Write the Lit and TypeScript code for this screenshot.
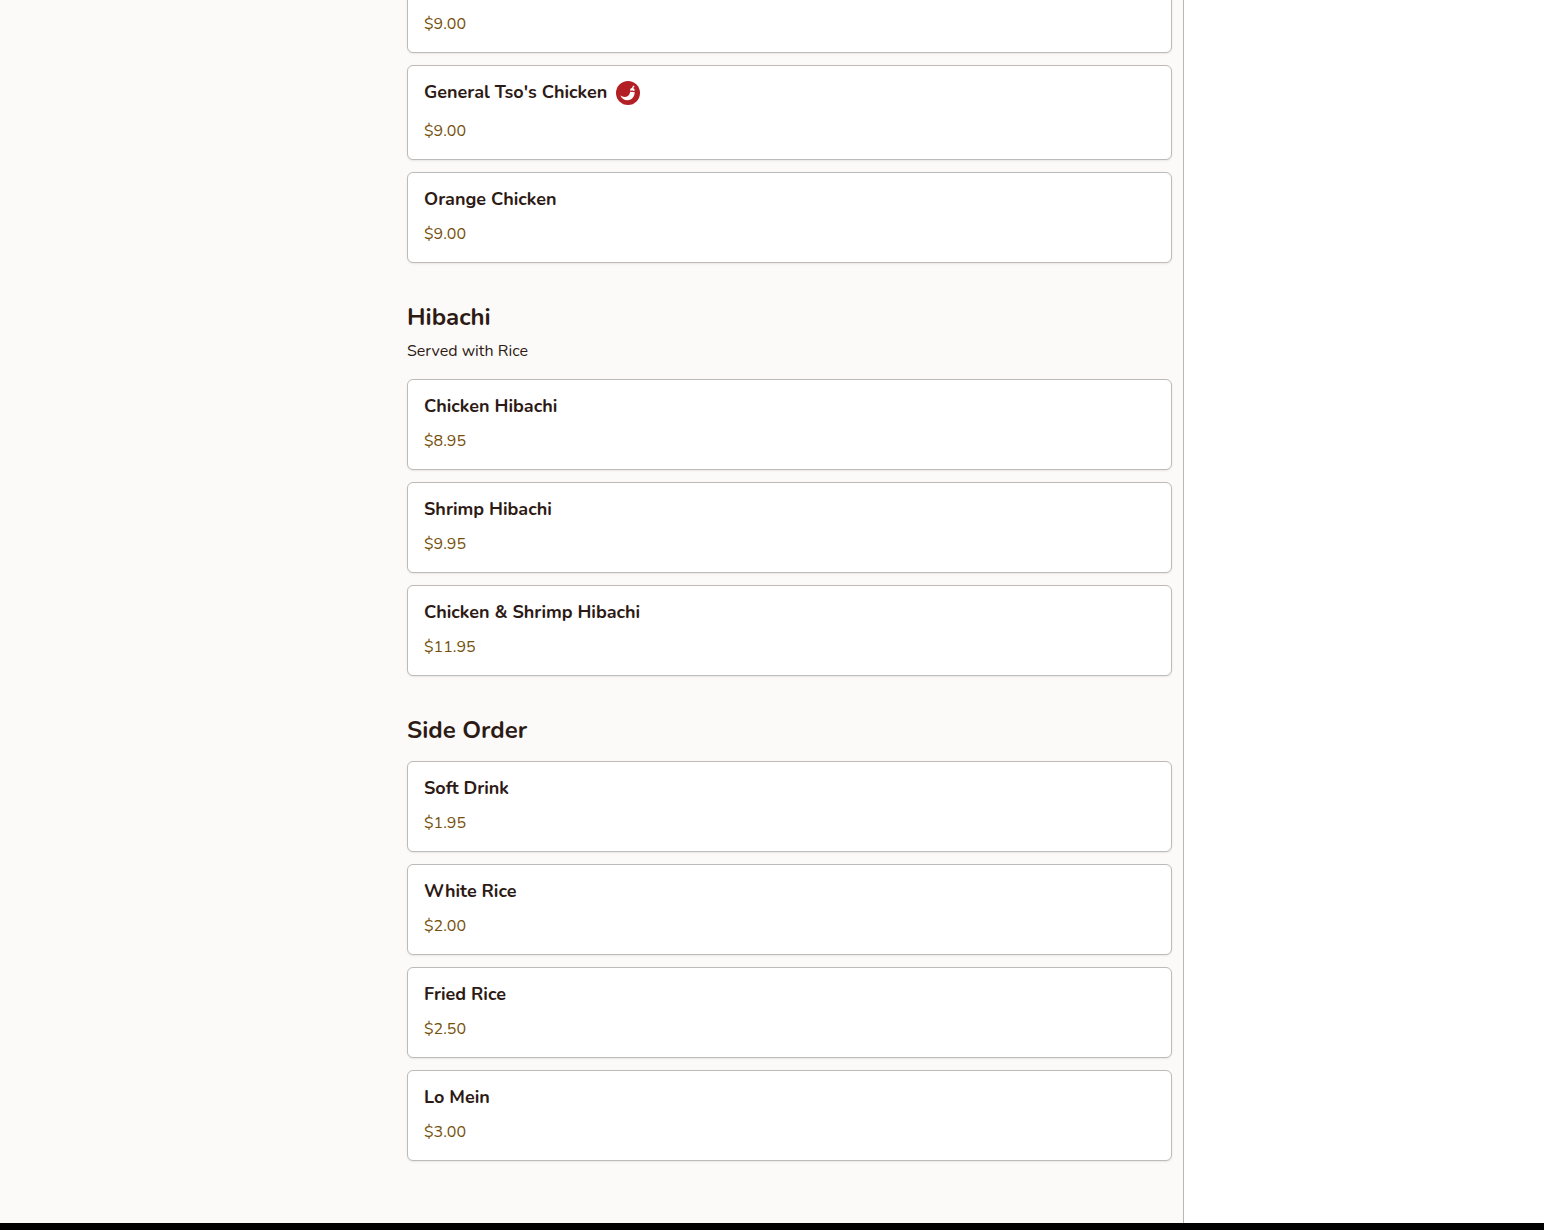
import { LitElement, html, css, nothing } from "lit";
import { customElement, property } from "lit/decorators.js";

interface Dish {
  name: string;
  price: string;
  spicy?: boolean;
}

interface Section {
  id: string;
  title?: string;
  note?: string;
  dishes: Dish[];
}

const MENU: Section[] = [
  {
    id: "chicken",
    dishes: [
      { name: "Sesame Chicken", price: "$9.00" },
      { name: "General Tso's Chicken", price: "$9.00", spicy: true },
      { name: "Orange Chicken", price: "$9.00" },
    ],
  },
  {
    id: "hibachi",
    title: "Hibachi",
    note: "Served with Rice",
    dishes: [
      { name: "Chicken Hibachi", price: "$8.95" },
      { name: "Shrimp Hibachi", price: "$9.95" },
      { name: "Chicken & Shrimp Hibachi", price: "$11.95" },
    ],
  },
  {
    id: "side-order",
    title: "Side Order",
    dishes: [
      { name: "Soft Drink", price: "$1.95" },
      { name: "White Rice", price: "$2.00" },
      { name: "Fried Rice", price: "$2.50" },
      { name: "Lo Mein", price: "$3.00" },
    ],
  },
];

@customElement("menu-item")
export class MenuItem extends LitElement {
  @property({ attribute: false }) dish!: Dish;

  static styles = css`
    :host {
      display: block;
    }
    .card {
      display: block;
      box-sizing: border-box;
      padding: 14px 16px 16px;
      border: 1px solid #bdbab8;
      border-radius: 6px;
      background: #fff;
      box-shadow: 0 1px 2px rgba(0, 0, 0, 0.08);
      color: #2d1a15;
      text-decoration: none;
    }
    .name {
      display: flex;
      align-items: flex-start;
      gap: 9px;
      margin: 0;
      font-size: 18px;
      font-weight: 700;
      line-height: 24px;
    }
    .spicy {
      display: block;
      width: 24px;
      height: 24px;
      margin: 1px 0 3px;
    }
    .price {
      margin: 11px 0 0;
      font-size: 16px;
      line-height: 24px;
      color: #754f0c;
    }
  `;

  render() {
    const { name, price, spicy } = this.dish;
    return html`
      <a class="card" href="#">
        <h3 class="name">
          <span>${name}</span>
          ${spicy
            ? html`<svg class="spicy" viewBox="0 0 24 24" role="img" aria-label="Spicy">
                <circle cx="12" cy="12" r="12" fill="#b22026" />
                <path
                  d="M4.300 14.200C6.500 16.200 9.800 16.500 11.900 14.900C13.500 13.700 13.900 12.200 14.100 10.500C14.700 11.100 15.500 11.200 16.200 10.700C16.900 11.300 17.800 11.300 18.500 10.800C19 14.200 17.200 17.500 14 18.800C10.200 20.200 5.900 18.400 4.300 14.200Z"
                  fill="#fff"
                />
                <path
                  d="M14.100 9.200C14.200 7.900 15 7.200 16.100 7.100C16.200 6.100 16.700 5.200 17.600 4.600L18.600 5.500C17.800 6 17.500 6.600 17.500 7.400C18.500 7.700 18.900 8.600 18.600 9.600C17.900 10.100 17 10 16.300 9.300C15.600 9.900 14.800 9.900 14.100 9.200Z"
                  fill="#fff"
                />
              </svg>`
            : nothing}
        </h3>
        <p class="price">${price}</p>
      </a>
    `;
  }
}

@customElement("app-root")
export class AppRoot extends LitElement {
  static styles = css`
    :host {
      display: block;
      font-family: Nunito, "Open Sans", Lato, sans-serif;
      color: #2d1a15;
    }
    .page {
      display: flex;
      flex-direction: column;
      min-height: 100vh;
      overflow: hidden;
      background: #fff;
    }
    .body {
      flex: 1;
      display: grid;
      grid-template-columns: 395px minmax(0, 1fr) 360px;
    }
    .nav {
      background: #fbfaf8;
    }
    .menu {
      padding: 0 11px 62px 12px;
      border-right: 1px solid #b9b7b5;
      background: #fbfaf8;
    }
    /* The list starts part way through its first card. */
    .sections {
      display: grid;
      gap: 38px;
      margin-top: -38px;
    }
    .title {
      margin: 0;
      font-size: 24px;
      font-weight: 700;
      line-height: 32px;
    }
    .note {
      margin: 5px 0 0;
      font-size: 16px;
      line-height: 26px;
    }
    .head {
      margin-bottom: 15px;
    }
    .list {
      display: grid;
      gap: 12px;
      margin: 0;
      padding: 0;
      list-style: none;
    }
    .footer {
      height: 7px;
      background: #000;
    }
  `;

  render() {
    return html`
      <div class="page">
        <div class="body">
          <div class="nav"></div>
          <main class="menu">
            <div class="sections">
              ${MENU.map(
                (s) => html`
                  <section id=${s.id}>
                    ${s.title
                      ? html`<header class="head">
                          <h2 class="title">${s.title}</h2>
                          ${s.note ? html`<p class="note">${s.note}</p>` : nothing}
                        </header>`
                      : nothing}
                    <ul class="list">
                      ${s.dishes.map((d) => html`<li><menu-item .dish=${d}></menu-item></li>`)}
                    </ul>
                  </section>
                `
              )}
            </div>
          </main>
          <aside></aside>
        </div>
        <footer class="footer"></footer>
      </div>
    `;
  }
}
